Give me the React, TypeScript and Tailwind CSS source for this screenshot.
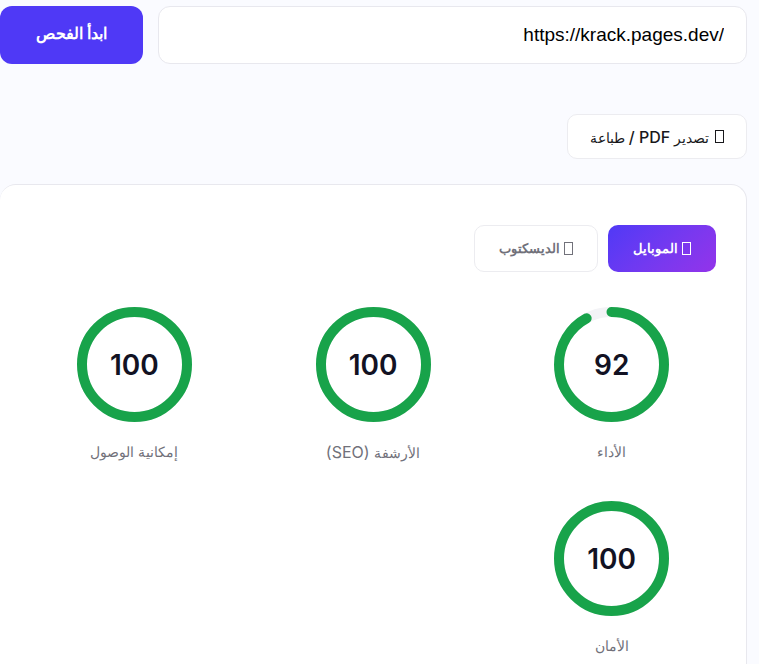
import { useState } from "react";

type Metric = { id: string; label: string; latin?: string; score: number };

const METRICS: Metric[] = [
  { id: "performance", label: "الأداء", score: 92 },
  { id: "seo", label: "الأرشفة", latin: "(SEO)", score: 100 },
  { id: "accessibility", label: "إمكانية الوصول", score: 100 },
  { id: "security", label: "الأمان", score: 100 },
];

const RADIUS = 52.5;
const CIRCUMFERENCE = 2 * Math.PI * RADIUS;

function TofuIcon() {
  return (
    <svg viewBox="0 0 9 13" className="h-[13px] w-[9px] shrink-0" fill="none" stroke="currentColor" aria-hidden="true">
      <rect x="0.5" y="0.5" width="8" height="12" />
    </svg>
  );
}

function ScoreRing({ metric }: { metric: Metric }) {
  return (
    <div className="flex flex-col items-center gap-[18px]">
      <div className="grid size-[115px] place-items-center">
        <svg viewBox="0 0 115 115" className="col-start-1 row-start-1 size-full -rotate-90" fill="none" aria-hidden="true">
          <circle cx="57.5" cy="57.5" r={RADIUS} stroke="#f3f3f6" strokeWidth="10" />
          <circle
            cx="57.5"
            cy="57.5"
            r={RADIUS}
            stroke="#18a34a"
            strokeWidth="10"
            strokeLinecap="round"
            strokeDasharray={CIRCUMFERENCE}
            strokeDashoffset={CIRCUMFERENCE * (1 - metric.score / 100)}
          />
        </svg>
        <span className="col-start-1 row-start-1 text-[28px] leading-9 font-semibold text-[#121223]">{metric.score}</span>
      </div>
      <span className="text-sm leading-6 text-[#71717a]">
        {metric.label}
        {metric.latin && <span className="text-base leading-6"> {metric.latin}</span>}
      </span>
    </div>
  );
}

export default function App() {
  const [url, setUrl] = useState("https://krack.pages.dev/");
  const [device, setDevice] = useState("mobile");

  const tab = (active: boolean) =>
    active
      ? "flex h-[47px] items-center justify-center gap-1 rounded-[10px] border border-transparent bg-linear-135 from-[#4f39f6] to-[#9333ea] bg-origin-border px-6 text-[13px] font-bold text-white"
      : "flex h-[47px] items-center justify-center gap-1 rounded-[10px] border border-[#ececf0] bg-white px-6 text-[13px] font-bold text-[#71717a]";

  return (
    <main
      dir="rtl"
      className="min-h-screen bg-[#fafbff] pt-1.5 pr-3 font-[Inter,'Open_Sans',sans-serif] text-[#18181b]"
    >
      <form className="flex gap-[15px]" onSubmit={(e) => e.preventDefault()}>
        <input
          type="url"
          dir="ltr"
          aria-label="رابط الموقع"
          value={url}
          onChange={(e) => setUrl(e.target.value)}
          className="h-[58px] min-w-0 flex-1 rounded-xl border border-[#e8e8ee] bg-white px-[22px] text-right font-['Liberation_Sans',Arial,sans-serif] text-[19px] text-black outline-none"
        />
        <button type="submit" className="h-[58px] w-[143px] rounded-xl bg-[#4f39f6] pb-1 text-base font-bold text-white">
          ابدأ الفحص
        </button>
      </form>

      <button
        type="button"
        className="mt-[50px] flex h-[45px] items-center justify-center gap-1.5 rounded-[10px] border border-[#ececf0] bg-white px-[22px] text-sm font-medium"
      >
        <TofuIcon />
        <span>
          تصدير <span className="text-base">PDF /</span> طباعة
        </span>
      </button>

      <section className="mt-[25px] rounded-t-2xl border border-b-0 border-l-0 border-[#e8e8ee] bg-white px-[30px] pt-10">
        <div className="flex gap-2.5">
          <button type="button" aria-pressed={device === "mobile"} onClick={() => setDevice("mobile")} className={tab(device === "mobile")}>
            <TofuIcon />
            الموبايل
          </button>
          <button type="button" aria-pressed={device === "desktop"} onClick={() => setDevice("desktop")} className={tab(device === "desktop")}>
            <TofuIcon />
            الديسكتوب
          </button>
        </div>
        <div className="mt-[35px] grid grid-cols-3 gap-x-[30px] gap-y-9 pb-2">
          {METRICS.map((metric) => (
            <ScoreRing key={metric.id} metric={metric} />
          ))}
        </div>
      </section>
    </main>
  );
}
